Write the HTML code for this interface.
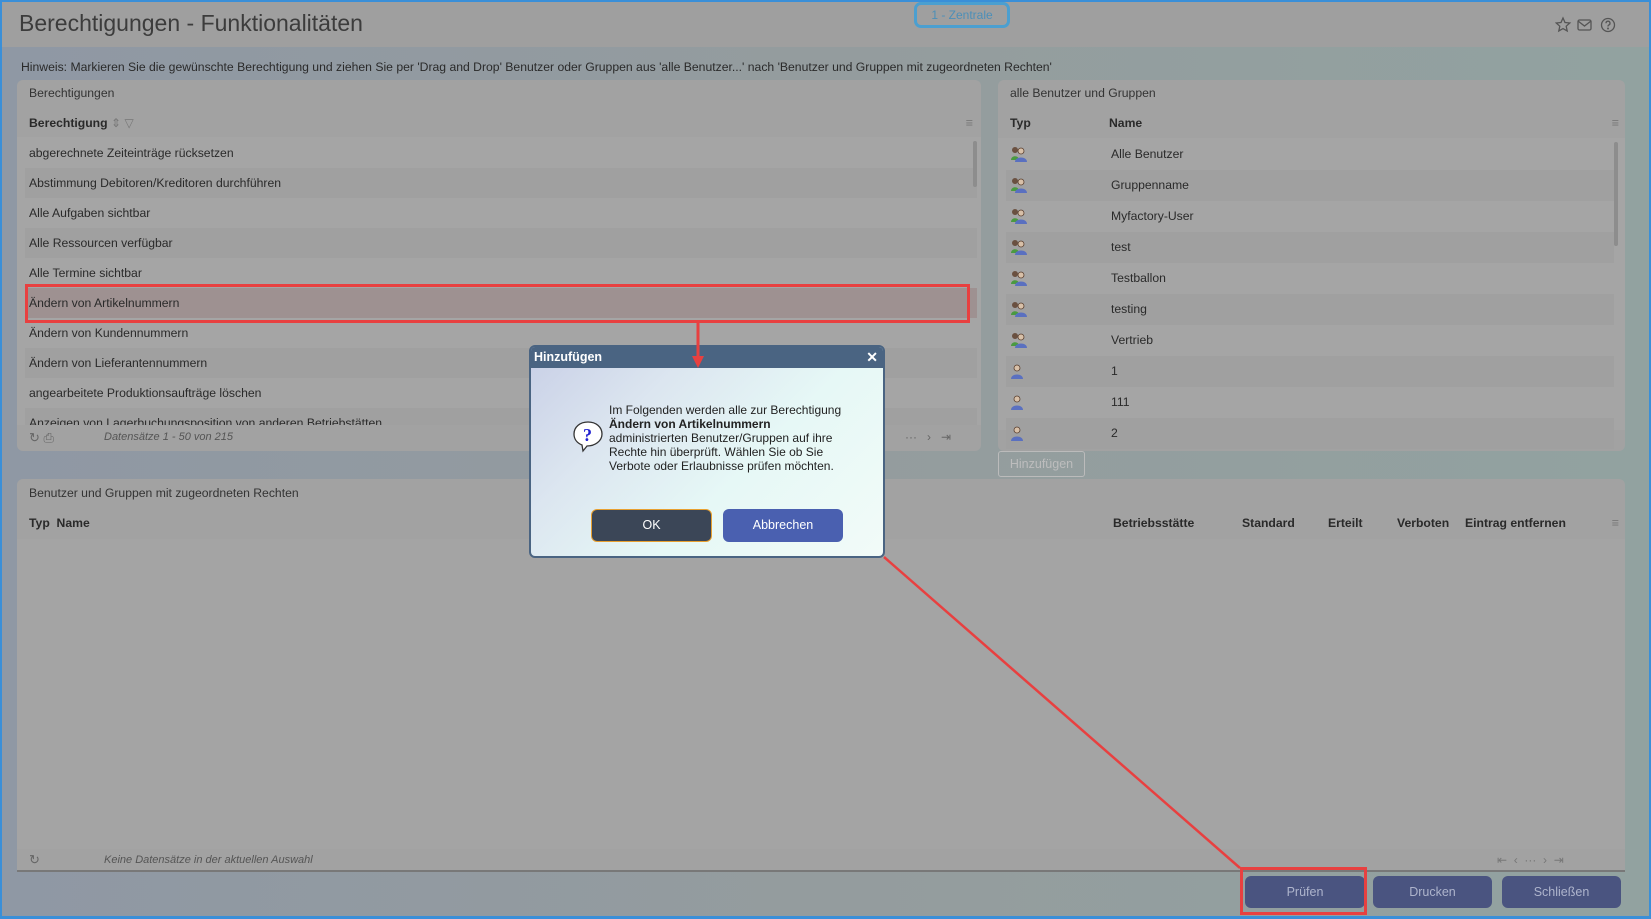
<!DOCTYPE html>
<html><head><meta charset="utf-8"><style>
*{box-sizing:border-box;margin:0;padding:0}
body{width:1651px;height:919px;overflow:hidden;font-family:"Liberation Sans",Arial,sans-serif;background:linear-gradient(90deg,#8f98a4,#949c9e 50%,#92a2a0);position:relative;color:#2c2c2c;font-size:12.5px}
.frame{position:absolute;inset:0;border:2px solid #3a8fd8;border-bottom-width:3px;pointer-events:none;z-index:50}
.hdr{position:absolute;left:0;top:0;width:1651px;height:47px;background:#9f9f9f}
.title{position:absolute;left:19px;top:10px;font-size:23px;color:#3c3c3c}
.pill{position:absolute;left:914px;top:2px;width:96px;height:26px;border:3px solid #4b9fd0;border-radius:7px;color:#4c8fb8;font-size:12px;text-align:center;line-height:20px}
.hint{position:absolute;left:21px;top:60px;font-size:12.2px;color:#2a2a2a}
.panel{position:absolute;background:#a2a2a2;border-radius:6px}
.ptitle{position:absolute;font-size:12.2px;color:#333}
.row{position:absolute;left:8px;height:30px;line-height:30px;font-size:12.2px;color:#2a2a2a;padding-left:4px}
.row:nth-child(even){background:#a0a0a0}
.th{position:absolute;font-weight:bold;font-size:12.2px;color:#2a2a2a}
.btn{position:absolute;height:32px;border-radius:6px;background:#4a5480;color:#aeb4cc;text-align:center;line-height:32px;font-size:12.5px}
.red{position:absolute;border:3px solid #e84040}
.ic{position:absolute;left:13px;width:18px;height:18px}
</style></head><body>
<div class="hdr"></div>
<div class="title">Berechtigungen - Funktionalitäten</div>
<div class="pill">1 - Zentrale</div>
<svg style="position:absolute;left:1555px;top:16px" width="62" height="18" viewBox="0 0 62 18" fill="none" stroke="#555" stroke-width="1.3">
<path d="M8 2l2 4.5 4.8.5-3.6 3.2 1 4.8L8 12.6 3.8 15l1-4.8L1.2 7l4.8-.5z"/>
<rect x="23" y="4" width="13" height="10" rx="1.5"/><path d="M23 5l6.5 5 6.5-5"/>
<circle cx="53" cy="9" r="6.5"/><path d="M51 7.2a2 2 0 1 1 2.6 1.9c-.6.2-.6.8-.6 1.4"/><circle cx="53" cy="12.5" r=".4" fill="#555"/>
</svg>
<div class="hint">Hinweis: Markieren Sie die gewünschte Berechtigung und ziehen Sie per 'Drag and Drop' Benutzer oder Gruppen aus 'alle Benutzer...' nach 'Benutzer und Gruppen mit zugeordneten Rechten'</div>

<div class="panel" style="left:17px;top:80px;width:964px;height:371px">
<div class="ptitle" style="left:12px;top:6px">Berechtigungen</div>
<div class="th" style="left:12px;top:36px">Berechtigung <span style="font-weight:normal;color:#777">⇕ ▽</span></div>
<div style="position:absolute;right:8px;top:36px;color:#777">≡</div>
<div style="position:absolute;left:0;top:57px;width:964px;height:288px;overflow:hidden;background:#a5a5a5">
<div class="row" style="top:1px;width:952px">abgerechnete Zeiteinträge rücksetzen</div>
<div class="row" style="top:31px;width:952px">Abstimmung Debitoren/Kreditoren durchführen</div>
<div class="row" style="top:61px;width:952px">Alle Aufgaben sichtbar</div>
<div class="row" style="top:91px;width:952px">Alle Ressourcen verfügbar</div>
<div class="row" style="top:121px;width:952px">Alle Termine sichtbar</div>
<div class="row" style="top:151px;width:952px;background:#9e9191">Ändern von Artikelnummern</div>
<div class="row" style="top:181px;width:952px">Ändern von Kundennummern</div>
<div class="row" style="top:211px;width:952px">Ändern von Lieferantennummern</div>
<div class="row" style="top:241px;width:952px">angearbeitete Produktionsaufträge löschen</div>
<div class="row" style="top:271px;width:952px">Anzeigen von Lagerbuchungsposition von anderen Betriebstätten</div>
<div style="position:absolute;left:956px;top:4px;width:4px;height:46px;background:#8d8d8d;border-radius:2px"></div>
</div>
<div style="position:absolute;left:12px;top:350px;color:#666;font-size:13px">↻ ⎙</div>
<div style="position:absolute;left:87px;top:351px;color:#555;font-style:italic;font-size:11px">Datensätze 1 - 50 von 215</div>
<div style="position:absolute;left:888px;top:350px;color:#666;font-size:12px">···&nbsp;&nbsp;&nbsp;›&nbsp;&nbsp;&nbsp;⇥</div>
</div>

<div class="panel" style="left:998px;top:80px;width:627px;height:371px">
<div class="ptitle" style="left:12px;top:6px">alle Benutzer und Gruppen</div>
<div class="th" style="left:12px;top:36px">Typ</div>
<div class="th" style="left:111px;top:36px">Name</div>
<div style="position:absolute;right:6px;top:36px;color:#777">≡</div>
<div style="position:absolute;left:0;top:58px;width:627px;height:292px;overflow:hidden;background:#a5a5a5">
<div style="position:absolute;left:616px;top:4px;width:4px;height:104px;background:#8d8d8d;border-radius:2px"></div>
</div>
</div>
<div id="ulist"></div>
<div style="position:absolute;left:998px;top:451px;width:87px;height:26px;border:1px solid #bbb;border-radius:3px;color:#bdbdbd;text-align:center;line-height:24px;font-size:12.5px">Hinzufügen</div>

<div class="panel" style="left:17px;top:479px;width:1608px;height:393px;border-radius:6px 6px 0 0;border-bottom:2px solid #787878">
<div class="ptitle" style="left:12px;top:7px">Benutzer und Gruppen mit zugeordneten Rechten</div>
<div class="th" style="left:12px;top:37px">Typ&nbsp;&nbsp;Name</div>
<div class="th" style="left:1096px;top:37px">Betriebsstätte</div>
<div class="th" style="left:1225px;top:37px">Standard</div>
<div class="th" style="left:1311px;top:37px">Erteilt</div>
<div class="th" style="left:1380px;top:37px">Verboten</div>
<div class="th" style="left:1448px;top:37px">Eintrag entfernen</div>
<div style="position:absolute;right:6px;top:37px;color:#777">≡</div>
<div style="position:absolute;left:0;top:60px;width:1608px;height:310px;background:#a4a4a4"></div>
<div style="position:absolute;left:12px;top:373px;color:#666;font-size:13px">↻</div>
<div style="position:absolute;left:87px;top:375px;color:#555;font-style:italic;font-size:11px">Keine Datensätze in der aktuellen Auswahl</div>
<div style="position:absolute;left:1480px;top:374px;color:#777;font-size:12px">⇤&nbsp;&nbsp;‹&nbsp;&nbsp;···&nbsp;&nbsp;›&nbsp;&nbsp;⇥</div>
</div>

<div class="btn" style="left:1245px;top:876px;width:120px">Prüfen</div>
<div class="btn" style="left:1373px;top:876px;width:119px">Drucken</div>
<div class="btn" style="left:1502px;top:876px;width:119px">Schließen</div>

<div class="red" style="left:25px;top:284px;width:945px;height:39px"></div>
<div class="red" style="left:1240px;top:867px;width:127px;height:48px"></div>
<svg style="position:absolute;left:0;top:0;z-index:20" width="1651" height="919">
<line x1="698" y1="322" x2="698" y2="360" stroke="#e84040" stroke-width="3"/>
<path d="M692 356l6 12 6-12z" fill="#e84040"/>
<line x1="884" y1="557" x2="1240" y2="868" stroke="#e84040" stroke-width="2.5"/>
</svg>

<div style="position:absolute;left:529px;top:345px;width:356px;height:213px;border:2px solid #4a6482;border-radius:6px;overflow:hidden;z-index:10;background:linear-gradient(135deg,#c8cfe6 0%,#dce6f0 30%,#e6f8f6 60%,#f2fbf8 100%)">
<div style="height:21px;background:#4a6482;color:#fff;font-weight:bold;font-size:12.5px;line-height:20px;padding-left:3px">Hinzufügen<span style="position:absolute;right:5px;top:0;font-size:14px">✕</span></div>
<div style="position:absolute;left:41px;top:72px;width:32px;height:34px"><svg width="32" height="34" viewBox="0 0 32 34"><path d="M16 3C8 3 2 8 2 15c0 5 3 9 8 11l1 6 4-5c8 0 15-5 15-12S24 3 16 3z" fill="#fff" stroke="#333" stroke-width="1.3"/><text x="11" y="22" font-family="Liberation Serif" font-weight="bold" font-size="18" fill="#2020d0">?</text></svg></div>
<div style="position:absolute;left:78px;top:56px;width:240px;font-size:12px;line-height:14px;color:#222">Im Folgenden werden alle zur Berechtigung<br><b>Ändern von Artikelnummern</b><br>administrierten Benutzer/Gruppen auf ihre<br>Rechte hin überprüft. Wählen Sie ob Sie<br>Verbote oder Erlaubnisse prüfen möchten.</div>
<div style="position:absolute;left:60px;top:162px;width:121px;height:33px;background:#3b4657;border:1px solid #e8a030;border-radius:6px;color:#fff;text-align:center;line-height:31px;font-size:12.5px">OK</div>
<div style="position:absolute;left:192px;top:162px;width:120px;height:33px;background:#4a60b0;border-radius:6px;color:#fff;text-align:center;line-height:33px;font-size:12.5px">Abbrechen</div>
</div>
<div class="frame"></div>
<script>
var names=["Alle Benutzer","Gruppenname","Myfactory-User","test","Testballon","testing","Vertrieb","1","111","2"];
var h="";for(var i=0;i<names.length;i++){var y=139+i*31;var g=i<7;
h+='<div style="position:absolute;left:1006px;top:'+y+'px;width:608px;height:31px;background:'+(i%2?'#a0a0a0':'#a5a5a5')+';font-size:12.2px;line-height:30px;color:#2a2a2a"><svg class="ic" style="left:4px;top:6px" viewBox="0 0 18 18">'+(g?'<circle cx="5" cy="5" r="3" fill="#6a5040"/><path d="M1 15c0-5 8-5 8 0z" fill="#4a9a40"/>':'')+'<circle cx="'+(g?11:7)+'" cy="6" r="3" fill="#d8c0a8" stroke="#5a4030" stroke-width=".8"/><path d="M'+(g?5:1)+' 17c0-6 12-6 12 0z" fill="#5a70c0"/></svg><span style="position:absolute;left:105px">'+names[i]+'</span></div>';}
document.getElementById("ulist").innerHTML=h;
</script>
</body></html>
